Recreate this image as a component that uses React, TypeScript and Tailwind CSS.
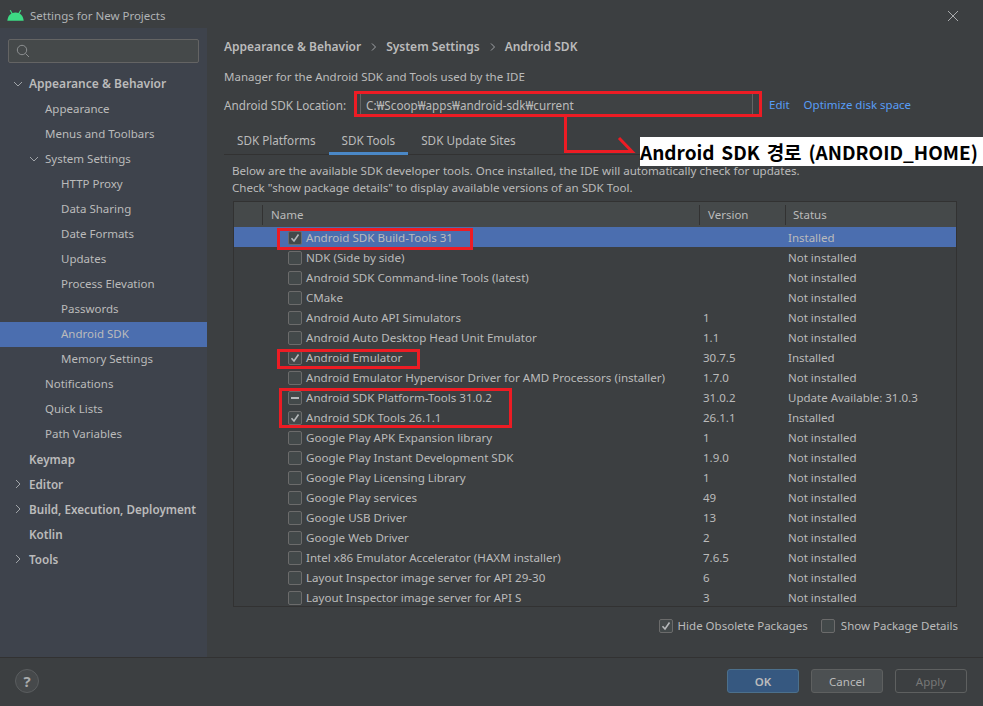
import React from "react";

const font = { fontFamily: '"Noto Sans", "Noto Sans CJK KR", sans-serif' };

const Chevron = ({ open }: { open?: boolean }) => (
  <svg width="10" height="10" viewBox="0 0 10 10" fill="none" stroke="#a0a4a8" strokeWidth="1" className="shrink-0">
    {open ? <path d="M1 3 L5 7 L9 3" /> : <path d="M3 1 L7 5 L3 9" />}
  </svg>
);

const Check = ({ state }: { state?: "on" | "mixed" | "off" }) => (
  <span className="flex h-[14px] w-[14px] shrink-0 items-center justify-center rounded-[2px] border border-[#6b6b6b] bg-[#43494a]">
    {state === "on" && (
      <svg width="10" height="10" viewBox="0 0 10 10" fill="none" stroke="#b5b8ba" strokeWidth="1.6">
        <path d="M1.5 5.2 L4 8 L8.5 1.5" />
      </svg>
    )}
    {state === "mixed" && <span className="h-[2px] w-[8px] bg-[#b5b8ba]" />}
  </span>
);

type Side = { t: string; pl: number; bold?: boolean; chev?: "open" | "closed"; sel?: boolean };
const side: Side[] = [
  { t: "Appearance & Behavior", pl: 29, bold: true, chev: "open" },
  { t: "Appearance", pl: 45 },
  { t: "Menus and Toolbars", pl: 45 },
  { t: "System Settings", pl: 45, chev: "open" },
  { t: "HTTP Proxy", pl: 61 },
  { t: "Data Sharing", pl: 61 },
  { t: "Date Formats", pl: 61 },
  { t: "Updates", pl: 61 },
  { t: "Process Elevation", pl: 61 },
  { t: "Passwords", pl: 61 },
  { t: "Android SDK", pl: 61, sel: true },
  { t: "Memory Settings", pl: 61 },
  { t: "Notifications", pl: 45 },
  { t: "Quick Lists", pl: 45 },
  { t: "Path Variables", pl: 45 },
  { t: "Keymap", pl: 29, bold: true },
  { t: "Editor", pl: 29, bold: true, chev: "closed" },
  { t: "Build, Execution, Deployment", pl: 29, bold: true, chev: "closed" },
  { t: "Kotlin", pl: 29, bold: true },
  { t: "Tools", pl: 29, bold: true, chev: "closed" },
];

type Row = [string, string, string, ("on" | "mixed" | "off")?];
const rows: Row[] = [
  ["Android SDK Build-Tools 31", "", "Installed", "on"],
  ["NDK (Side by side)", "", "Not installed"],
  ["Android SDK Command-line Tools (latest)", "", "Not installed"],
  ["CMake", "", "Not installed"],
  ["Android Auto API Simulators", "1", "Not installed"],
  ["Android Auto Desktop Head Unit Emulator", "1.1", "Not installed"],
  ["Android Emulator", "30.7.5", "Installed", "on"],
  ["Android Emulator Hypervisor Driver for AMD Processors (installer)", "1.7.0", "Not installed"],
  ["Android SDK Platform-Tools 31.0.2", "31.0.2", "Update Available: 31.0.3", "mixed"],
  ["Android SDK Tools 26.1.1", "26.1.1", "Installed", "on"],
  ["Google Play APK Expansion library", "1", "Not installed"],
  ["Google Play Instant Development SDK", "1.9.0", "Not installed"],
  ["Google Play Licensing Library", "1", "Not installed"],
  ["Google Play services", "49", "Not installed"],
  ["Google USB Driver", "13", "Not installed"],
  ["Google Web Driver", "2", "Not installed"],
  ["Intel x86 Emulator Accelerator (HAXM installer)", "7.6.5", "Not installed"],
  ["Layout Inspector image server for API 29-30", "6", "Not installed"],
  ["Layout Inspector image server for API S", "3", "Not installed"],
];

const RedBox = ({ c }: { c: string }) => <div className={`pointer-events-none absolute border-[3px] border-[#ed1c24] ${c}`} />;

const Crumb = () => (
  <span className="ml-[9px] mr-[8px]">
    <svg width="8" height="8" viewBox="0 0 8 8" fill="none" stroke="#a0a4a8"><path d="M2 0.5 L5.5 4 L2 7.5" /></svg>
  </span>
);

export default function App() {
  return (
    <div style={font} className="relative flex h-[706px] w-[983px] flex-col overflow-hidden bg-[#3c3f41] text-[11.5px] leading-[16px] text-[#bbbbbb]">
      {/* title bar */}
      <div className="flex h-[28px] shrink-0 items-center pl-[7px] pr-[24px] pt-[3px]">
        <svg width="17" height="11" viewBox="0 0 17 11" fill="#3ddc84">
          <path d="M0.3 10.8 C0.8 5.5 4 2.5 8.5 2.5 C13 2.5 16.2 5.5 16.7 10.8 Z" />
          <path d="M3.2 0.3 L5.4 4" stroke="#3ddc84" strokeWidth="1.2" />
          <path d="M13.8 0.3 L11.6 4" stroke="#3ddc84" strokeWidth="1.2" />
        </svg>
        <span className="ml-[6px] text-[#b0b3b5]">Settings for New Projects</span>
        <svg className="ml-auto" width="12" height="12" viewBox="0 0 12 12" stroke="#a9abad" strokeWidth="1" fill="none">
          <path d="M1 1 L11 11 M11 1 L1 11" />
        </svg>
      </div>

      <div className="flex min-h-0 flex-1">
        {/* sidebar */}
        <aside className="flex w-[207px] shrink-0 flex-col bg-[#3e434c]">
          <div className="mx-[8px] mt-[11px] flex h-[24px] items-center rounded-[2px] border border-[#646464] bg-[#45494a] pl-[7px]">
            <svg width="14" height="14" viewBox="0 0 14 14" fill="none" stroke="#8c8f91" strokeWidth="1">
              <circle cx="6" cy="6" r="4.7" />
              <path d="M9.5 9.5 L13 13" />
            </svg>
          </div>
          <nav className="mt-[9px] flex flex-col">
            {side.map((s, i) => (
              <div key={s.t} style={{ paddingLeft: s.pl }} className={`relative flex h-[25px] items-center pb-[2px] ${s.sel ? "bg-[#4b6eaf]" : ""} ${s.bold ? "font-semibold" : ""} ${i === 0 ? "text-[12px]" : s.bold ? "text-[11.7px]" : ""}`}>
                {s.chev && (
                  <span style={{ left: s.pl - 16 }} className="absolute top-[7px]">
                    <Chevron open={s.chev === "open"} />
                  </span>
                )}
                {s.t}
              </div>
            ))}
          </nav>
        </aside>

        {/* main */}
        <main className="flex min-w-0 flex-1 flex-col pl-[17px] pr-[16px]">
          <div className="mt-[11px] flex h-[16px] items-center text-[12px] font-semibold">
            <span>Appearance &amp; Behavior</span>
            <Crumb />
            <span>System Settings</span>
            <Crumb />
            <span>Android SDK</span>
          </div>
          <div className="mt-[14px] h-[16px]">Manager for the Android SDK and Tools used by the IDE</div>
          <div className="mt-[7px] flex h-[26px] items-center text-[11.7px]">
            <span className="w-[136px] shrink-0">Android SDK Location:</span>
            <div className="flex h-[24px] w-[393px] items-center border border-[#646464] bg-[#3f4244] pl-[5px] text-[#bbbbbb]">C:₩Scoop₩apps₩android-sdk₩current</div>
            <span className="ml-[16px] text-[11.5px] text-[#589df6]">Edit</span>
            <span className="ml-[14px] text-[11.5px] text-[#589df6]">Optimize disk space</span>
          </div>

          <div className="mt-[7px] flex h-[30px] shrink-0 border-b border-[#323232] text-[11.7px]">
            {["SDK Platforms", "SDK Tools", "SDK Update Sites"].map((t, i) => (
              <div key={t} className={`flex h-[30px] items-center px-[13px] ${i === 1 ? "border-b-[3px] border-[#4a88c7] pt-[3px]" : ""}`}>{t}</div>
            ))}
          </div>

          <div className="ml-[8px] mt-[7px] text-[11.6px] leading-[17px]">
            <div>Below are the available SDK developer tools. Once installed, the IDE will automatically check for updates.</div>
            <div>Check "show package details" to display available versions of an SDK Tool.</div>
          </div>

          {/* table */}
          <div className="ml-[9px] mr-[10px] mt-[5px] flex h-[406px] flex-col border border-[#323232]">
            <div className="flex h-[25px] shrink-0 items-center bg-[#45494a]">
              <div className="h-[20px] w-[29px] border-r border-[#323232]" />
              <div className="flex h-[20px] w-[437px] items-center border-r border-[#323232] pl-[8px]">Name</div>
              <div className="flex h-[20px] w-[86px] items-center border-r border-[#323232] pl-[8px]">Version</div>
              <div className="pl-[7px]">Status</div>
            </div>
            {rows.map(([n, v, st, c], i) => (
              <div key={n} className={`flex h-[20px] shrink-0 items-center pt-[1px] ${i === 0 ? "bg-[#4b6eaf]" : ""}`}>
                <div className="ml-[54px] flex w-[415px] items-center gap-[4px]">
                  <Check state={c} />
                  <span className="whitespace-nowrap text-[11.6px]">{n}</span>
                </div>
                <div className="w-[85px] shrink-0">{v}</div>
                <div className="whitespace-nowrap">{st}</div>
              </div>
            ))}
          </div>

          <div className="mr-[9px] mt-[11px] flex h-[16px] items-center justify-end">
            <Check state="on" />
            <span className="ml-[5px] mr-[1px]">Hide Obsolete Packages</span>
            <span className="ml-[12px]"><Check /></span>
            <span className="ml-[6px]">Show Package Details</span>
          </div>
        </main>
      </div>

      {/* footer */}
      <div className="flex h-[49px] shrink-0 items-start border-t border-[#323232] pl-[15px] pr-[16px] pt-[11px]">
        <div className="flex h-[24px] w-[24px] items-center justify-center rounded-full border border-[#5a5d5f] bg-[#46494b] text-[15px] font-bold text-[#a9abad]">?</div>
        <div className="ml-auto flex gap-[12px]">
          <button className="h-[24px] w-[72px] rounded-[3px] border border-[#4c708c] bg-[#365880] pt-[1px] font-semibold text-[#bbbbbb]">OK</button>
          <button className="h-[24px] w-[72px] rounded-[3px] border border-[#5e6060] bg-[#4c5052] pt-[1px]">Cancel</button>
          <button className="h-[24px] w-[72px] rounded-[3px] border border-[#5e6060] pt-[1px] text-[#777777]">Apply</button>
        </div>
      </div>

      {/* annotations */}
      <RedBox c="left-[354px] top-[91px] h-[26px] w-[408px]" />
      <RedBox c="left-[277px] top-[228px] h-[22px] w-[196px]" />
      <RedBox c="left-[277px] top-[349px] h-[20px] w-[143px]" />
      <RedBox c="left-[279px] top-[388px] h-[40px] w-[233px]" />
      <svg className="pointer-events-none absolute left-[560px] top-[115px]" width="80" height="42" fill="none" stroke="#ed1c24" strokeWidth="3">
        <path d="M5.5 2 L5.5 36.5 L72 36.5 L59 23" />
      </svg>
      <div className="absolute left-[640px] top-[137px] flex h-[29px] w-[343px] items-center whitespace-nowrap bg-white text-[19px] font-bold text-black" style={{ fontFamily: '"Noto Sans CJK KR", sans-serif', wordSpacing: "2.5px" }}>
        Android SDK 경로 (ANDROID_HOME)
      </div>
    </div>
  );
}
